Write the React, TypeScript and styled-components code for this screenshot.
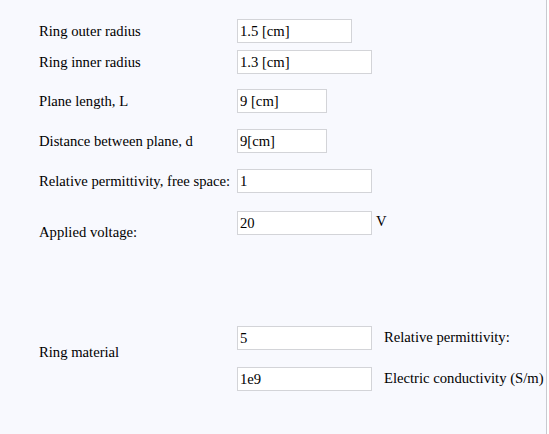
import React from "react";
import styled, { createGlobalStyle } from "styled-components";

const serif = `"Liberation Serif", "Times New Roman", serif`;

const GlobalStyle = createGlobalStyle`
  html, body {
    margin: 0;
    padding: 0;
    background: #ffffff;
  }
  body {
    font-family: ${serif};
    font-size: 14.67px;
    color: #000000;
  }
`;

const Panel = styled.div`
  box-sizing: border-box;
  width: 547px;
  height: 434px;
  background: #f8f9fe;
  border-right: 1px solid #c8cad0;
  padding: 19px 0 0 39px;
  display: flex;
  flex-flow: column nowrap;
`;

const Row = styled.div<{ $gap?: number }>`
  display: grid;
  grid-template-columns: 198px auto;
  grid-template-rows: 24px;
  align-items: center;
  margin-top: ${(p) => p.$gap ?? 0}px;
`;

const Label = styled.label<{ $offset?: number }>`
  font-family: ${serif};
  line-height: 18px;
  white-space: nowrap;
  ${(p) =>
    p.$offset !== undefined
      ? `align-self: start; padding-top: ${p.$offset}px;`
      : ""}
`;

const Input = styled.input<{ $width: number }>`
  box-sizing: border-box;
  width: ${(p) => p.$width}px;
  height: 24px;
  margin: 0;
  padding: 0 2px;
  border: 1px solid #d3d4d8;
  background: #ffffff;
  font-family: ${serif};
  font-size: 14.67px;
  color: #000000;
  outline: none;
`;

const InputWithUnit = styled.div`
  align-self: start;
  display: flex;
  align-items: flex-start;
  gap: 4px;
  line-height: 18px;
`;

const Unit = styled.span`
  padding-top: 1px;
`;

const MaterialGrid = styled.div<{ $gap: number }>`
  display: grid;
  grid-template-columns: 198px 147px auto;
  grid-template-rows: 24px 24px;
  row-gap: 17px;
  align-items: center;
  margin-top: ${(p) => p.$gap}px;
`;

const MaterialLabel = styled(Label)`
  grid-row: 1 / span 2;
`;

const Note = styled.span`
  white-space: nowrap;
  line-height: 18px;
  margin-top: -2px;
`;

interface Field {
  label: string;
  value: string;
  width: number;
  gap: number;
}

const fields: Field[] = [
  { label: "Ring outer radius", value: "1.5 [cm]", width: 115, gap: 0 },
  { label: "Ring inner radius", value: "1.3 [cm]", width: 135, gap: 7 },
  { label: "Plane length, L", value: "9 [cm]", width: 90, gap: 15 },
  { label: "Distance between plane, d", value: "9[cm]", width: 90, gap: 16 },
  {
    label: "Relative permittivity, free space:",
    value: "1",
    width: 135,
    gap: 16,
  },
];

const App: React.FC = () => (
  <>
    <GlobalStyle />
    <Panel>
      {fields.map((f) => (
        <Row key={f.label} $gap={f.gap}>
          <Label>{f.label}</Label>
          <Input $width={f.width} defaultValue={f.value} />
        </Row>
      ))}
      <Row $gap={18}>
        <Label $offset={12}>Applied voltage:</Label>
        <InputWithUnit>
          <Input $width={135} defaultValue="20" />
          <Unit>V</Unit>
        </InputWithUnit>
      </Row>
      <MaterialGrid $gap={91}>
        <MaterialLabel $offset={17}>Ring material</MaterialLabel>
        <Input $width={135} defaultValue="5" />
        <Note>Relative permittivity:</Note>
        <Input $width={135} defaultValue="1e9" />
        <Note>Electric conductivity (S/m)</Note>
      </MaterialGrid>
    </Panel>
  </>
);

export default App;
